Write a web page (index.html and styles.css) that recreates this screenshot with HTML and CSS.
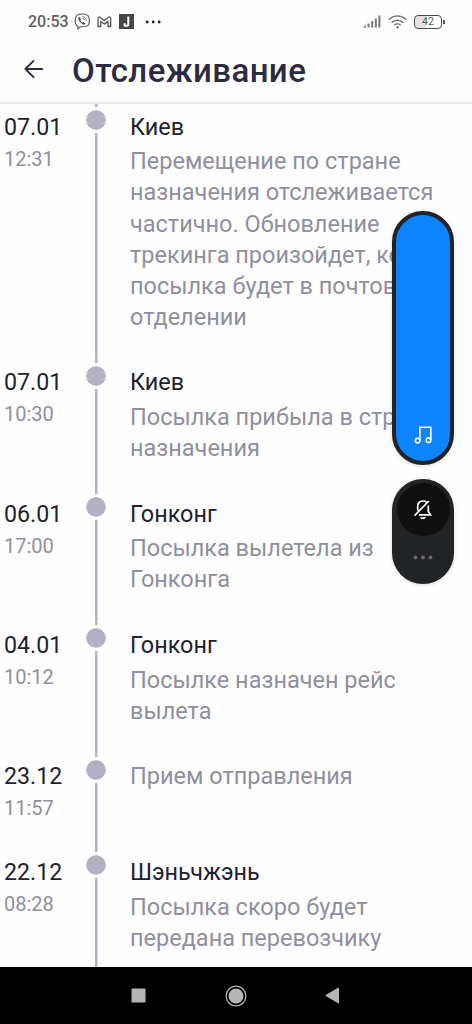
FILE: index.html
```html
<!DOCTYPE html>
<html lang="ru">
<head>
<meta charset="utf-8">
<title>Отслеживание</title>
<link rel="stylesheet" href="styles.css">
</head>
<body>
<div class="screen">
  <header class="header">
    <div class="status">
      <span class="clock">20:53</span>
      <svg class="viber" width="17" height="17" viewBox="0 0 17 17" fill="none" stroke="#555" stroke-width="1.1"><path d="M8.4 1C3 1 1.2 2.4 1.2 7.4c0 3.2.7 5 2.7 5.8v2.7l2.5-2.2c6.500.5 9-.7 9-6.300C15.400 2.500 13.500 1 8.400 1z"/><path d="M5.300 3.800c-1.300.7-1.200 1.900-.3 3.500 1 2 2.500 3.400 4.500 4.200.9.400 1.700-.3 2-1.100L9.300 8.900l-.9.800C7.300 9.100 6.600 8.200 6.300 7l.8-.8z" fill="#444" stroke="none"/><path stroke-width=".8" d="M8.500 3.700c2.500.2 3.700 1.500 3.800 4M8.700 5.500c1.100.1 1.700.8 1.800 1.900"/></svg>
      <svg class="gmail" width="15" height="12" viewBox="0 0 15 12" fill="none" stroke="#555" stroke-width="1.300" stroke-linejoin="round"><path d="M1 10.500V2.200C1 .9 2.200.6 3 1.200L7.300 4.500 11.700 1.200c.8-.6 2-.3 2 1v8.300h-2.700V5.400L7.300 8.100 3.700 5.400v5.100z"/></svg>
      <svg class="joom" width="15" height="15" viewBox="0 0 15 15"><path fill="#454545" d="M0 0h15v15H0z"/><path d="M9.300 2.500v8.300c0 .7-.3 1-1 1H5.600V9.300" fill="none" stroke="#fff" stroke-width="2"/></svg>
      <svg class="more" width="17" height="4" viewBox="0 0 17 4" fill="#222"><circle cx="2.200" cy="2" r="1.400"/><circle cx="8.200" cy="2" r="1.400"/><circle cx="14.200" cy="2" r="1.400"/></svg>
      <svg class="signal" width="18" height="13" viewBox="0 0 18 13" fill="#777"><path d="M0 12.500 3 10v2.500zM4.500 8.500h2v4h-2zM8.200 6h2v6.500h-2zM11.800 3.500h2v9h-2zM15.400.5h2v12h-2z"/></svg>
      <svg class="wifi" width="19" height="14" viewBox="0 0 19 14" fill="none" stroke="#777" stroke-width="1.500"><path d="M.8 4.700c5-4.800 12.400-4.800 17.400 0M3.500 7.600c3.500-3.300 8.500-3.300 12 0M6.200 10.200c2-1.800 4.600-1.800 6.600 0"/><circle cx="9.500" cy="12.200" r="1.200" fill="#777" stroke="none"/></svg>
      <span class="battery">42</span>
    </div>
    <div class="title-bar">
      <svg class="back" width="20" height="20" viewBox="0 0 20 20" fill="none" stroke="#2c2b42" stroke-width="1.900" stroke-linecap="round" stroke-linejoin="round"><path d="M18.200 10H1.500M9.500 1.900 1.400 10l8.100 8.100"/></svg>
      <h1 class="title">Отслеживание</h1>
    </div>
  </header>

  <main class="timeline">
    <section class="event">
      <div class="when"><div class="date">07.01</div><div class="time">12:31</div></div>
      <div class="rail"><i class="dot"></i></div>
      <div class="info"><div class="place">Киев</div><div class="desc">Перемещение по стране<br>назначения отслеживается<br>частично. Обновление<br>трекинга произойдет, когда<br>посылка будет в почтовом<br>отделении</div></div>
    </section>
    <section class="event">
      <div class="when"><div class="date">07.01</div><div class="time">10:30</div></div>
      <div class="rail"><i class="dot"></i></div>
      <div class="info"><div class="place">Киев</div><div class="desc">Посылка прибыла в страну<br>назначения</div></div>
    </section>
    <section class="event">
      <div class="when"><div class="date">06.01</div><div class="time">17:00</div></div>
      <div class="rail"><i class="dot"></i></div>
      <div class="info"><div class="place">Гонконг</div><div class="desc">Посылка вылетела из<br>Гонконга</div></div>
    </section>
    <section class="event">
      <div class="when"><div class="date">04.01</div><div class="time">10:12</div></div>
      <div class="rail"><i class="dot"></i></div>
      <div class="info"><div class="place">Гонконг</div><div class="desc">Посылке назначен рейс<br>вылета</div></div>
    </section>
    <section class="event">
      <div class="when"><div class="date">23.12</div><div class="time">11:57</div></div>
      <div class="rail"><i class="dot"></i></div>
      <div class="info"><div class="desc">Прием отправления</div></div>
    </section>
    <section class="event">
      <div class="when"><div class="date">22.12</div><div class="time">08:28</div></div>
      <div class="rail"><i class="dot"></i></div>
      <div class="info"><div class="place">Шэньчжэнь</div><div class="desc">Посылка скоро будет<br>передана перевозчику</div></div>
    </section>
  </main>

  <nav class="nav">
    <svg width="16" height="15" viewBox="0 0 16 15"><rect x=".5" y=".5" width="14" height="14" rx=".5" fill="#b5b5b5"/></svg>
    <svg width="22" height="22" viewBox="0 0 22 22"><circle cx="11" cy="11" r="9.900" fill="none" stroke="#b5b5b5" stroke-width="1.300"/><circle cx="11" cy="11" r="7.500" fill="#b5b5b5"/></svg>
    <svg width="16" height="17" viewBox="0 0 16 17"><path d="M.8 8.500 13.500 1v15z" fill="#b5b5b5" stroke="#b5b5b5" stroke-linejoin="round"/></svg>
  </nav>

  <div class="volume">
    <div class="slider">
      <svg width="18" height="18" viewBox="0 0 18 18" fill="none" stroke="#fff" stroke-width="1.600"><path d="M5.900 14.500V1.300h10.900v12.600"/><circle cx="3.600" cy="14.600" r="2.300"/><circle cx="14.500" cy="14.200" r="2.300"/></svg>
    </div>
    <div class="modes">
      <div class="mute">
        <svg width="20" height="21" viewBox="0 0 20 21" fill="none" stroke="#fff" stroke-width="1.700"><path d="M4.700 11.500V7.600c0-3.600 2.100-5.600 5.300-5.600 1.400 0 2.600.4 3.500 1.100M15.300 6.500v6l2.200 3.400H6M1.500 16.700 15.800 2"/><path d="M6.700 18.200h6.600L11.500 20h-3z" fill="#fff" stroke="none"/></svg>
      </div>
      <svg class="options" width="20" height="5" viewBox="0 0 20 5" fill="#68686a"><circle cx="2.500" cy="2.500" r="1.900"/><circle cx="10" cy="2.500" r="1.900"/><circle cx="17.500" cy="2.500" r="1.900"/></svg>
    </div>
  </div>
</div>
</body>
</html>
```
FILE: styles.css
```css
* { box-sizing: border-box; }
body { margin: 0; background: #fefefe; font-family: Roboto, "Noto Sans", sans-serif; }
svg { display: block; flex: none; }
.screen { position: relative; width: 472px; height: 1024px; overflow: hidden; display: flex; flex-direction: column; }

.header { flex: none; height: 104px; border-bottom: 2px solid #ebebec; background: #fefefe; }
.status { height: 43px; display: flex; align-items: center; padding: 0 28px; }
.clock { width: 46px; font-size: 16px; font-weight: 500; line-height: 20px; color: #626262; white-space: nowrap; }
.gmail { margin-left: 6px; }
.joom { margin-left: 7px; }
.more { margin-left: 11px; }
.signal { margin-left: auto; }
.wifi { margin-left: 7px; }
.battery { position: relative; width: 28px; height: 14px; margin: 0 2px 0 7px; border: 1.500px solid #4b4b4b; border-radius: 4px; background: linear-gradient(90deg, #e2e2e2 42%, #fefefe 42%); font-size: 10.500px; line-height: 12px; text-align: center; color: #555; }
.battery::after { content: ""; position: absolute; right: -4px; top: 4px; width: 2px; height: 4px; background: #555; }

.title-bar { height: 58px; display: flex; align-items: center; padding: 0 24px; }
.back { margin-top: -6px; }
.title { margin: -2px 0 0 28px; font-size: 33px; font-weight: 500; line-height: 40px; letter-spacing: .4px; color: #2c2b42; white-space: nowrap; }

.timeline { flex: 1; min-height: 0; overflow: hidden; }
.event { display: grid; grid-template-columns: 87px 18px 1fr; }
.event:first-child { margin-top: -.8px; }
.when { padding: 8.500px 0 0 4px; white-space: nowrap; }
.date { font-size: 23.200px; line-height: 31px; color: #22212e; }
.time { font-size: 20px; line-height: 31px; margin-top: 1px; color: #8f8fa1; }
.rail { position: relative; background: linear-gradient(#b3b2c3, #b3b2c3) center / 2.500px 100% no-repeat; }
.dot { position: absolute; left: -4px; top: 3.900px; width: 26px; height: 26px; border: 3px solid #fefefe; border-radius: 50%; background: #b1b1c3 padding-box; }
.info { padding: 8.500px 0 26px 25px; white-space: nowrap; min-height: 95.500px; }
.place { font-size: 23.400px; line-height: 31px; margin-bottom: 3.700px; color: #22212e; }
.desc { font-size: 23.500px; line-height: 31.080px; color: #8f8fa1; }

.nav { flex: none; height: 57px; background: #000; display: grid; grid-template-columns: repeat(3, 97px); justify-content: center; justify-items: center; align-items: center; }

.volume { position: absolute; left: 392px; top: 211px; width: 62px; }
.slider { height: 254px; border: 4px solid #222325; border-radius: 31px; background: #0c83ff; display: flex; justify-content: center; align-items: flex-end; padding-bottom: 17px; box-shadow: 0 1px 4px #0002; }
.modes { height: 105px; margin-top: 14px; padding-top: 4px; border-radius: 31px; background: #222325; display: flex; flex-direction: column; align-items: center; box-shadow: 0 1px 4px #0002; }
.mute { width: 53px; height: 53px; border-radius: 50%; background: #101011; display: flex; align-items: center; justify-content: center; }
.options { margin-top: 19px; }
```
